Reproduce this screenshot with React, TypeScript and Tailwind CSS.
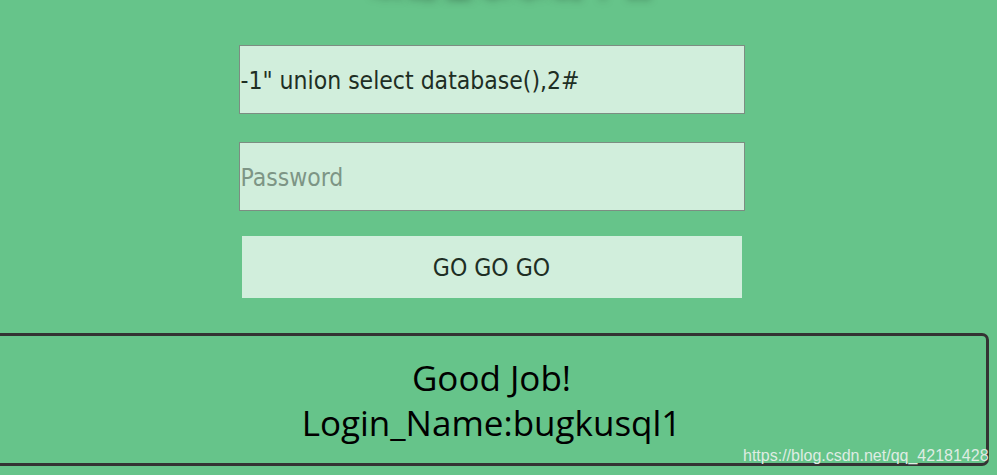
export default function App() {
  return (
    <div className="w-[997px] h-[475px] overflow-hidden bg-[#66c48a] relative font-['Open_Sans','Noto_Sans',sans-serif]">
      <div className="h-[10px] relative">
        <div className="absolute left-[372px] top-[-32px] text-[30px] leading-[30px] text-white tracking-[6px] [text-shadow:0_0_8px_rgba(0,0,0,0.6)] font-['Noto_Sans_CJK_SC',sans-serif] whitespace-nowrap">
          欢迎登录系统平台
        </div>
      </div>
      <div className="flex flex-col items-center pt-[35px] pr-[14px] font-['DejaVu_Sans',sans-serif] [font-stretch:condensed] text-[24.5px]">
        <div className="w-[506px] h-[69px] bg-[#d1eedc] border border-[#7c8d82] flex items-center pl-[1px] pt-[4px] text-[#1e2e24]">
          -1" union select database(),2#
        </div>
        <div className="mt-[28px] w-[506px] h-[69px] bg-[#d1eedc] border border-[#7c8d82] flex items-center pl-[1px] pt-[4px] text-[#7d9585]">
          Password
        </div>
        <div className="mt-[25px] w-[500px] h-[62px] bg-[#d1eedc] flex items-center justify-center pt-[2px] text-[#1e2e24]">
          GO GO GO
        </div>
      </div>
      <div className="ml-[-6px] mt-[35px] w-[995px] h-[133px] border-[3px] border-[#333333] rounded-[7px] flex flex-col items-center justify-center text-[35px] leading-[45px] text-black">
        <div>Good Job!</div>
        <div>Login_Name:bugkusql1</div>
      </div>
      <div className="absolute left-[743px] top-[444px] text-[16px] text-[#dfece3] font-['Liberation_Sans',Arial,sans-serif]">
        https://blog.csdn.net/qq_42181428
      </div>
    </div>
  );
}
